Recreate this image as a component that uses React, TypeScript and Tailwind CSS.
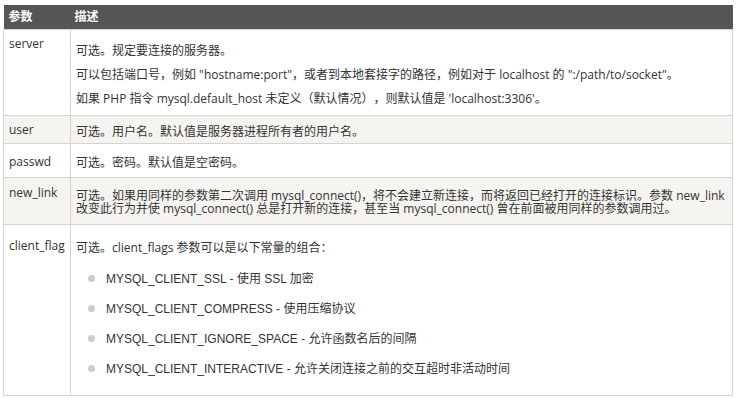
export default function App() {
  const flags = [
    "MYSQL_CLIENT_SSL - 使用 SSL 加密",
    "MYSQL_CLIENT_COMPRESS - 使用压缩协议",
    "MYSQL_CLIENT_IGNORE_SPACE - 允许函数名后的间隔",
    "MYSQL_CLIENT_INTERACTIVE - 允许关闭连接之前的交互超时非活动时间",
  ];

  return (
    <div className="min-h-[402px] bg-white pl-[3px] pt-[5px] font-['Open_Sans','Noto_Sans_CJK_SC',sans-serif] text-[12px] leading-[14px] text-[#333] [text-spacing-trim:space-all]">
      <table className="w-[730px] border-collapse">
        <thead>
          <tr className="h-[24px] bg-[#555] text-left text-white">
            <th className="w-[67px] px-[5px] font-bold">参数</th>
            <th className="px-[4px] font-bold">描述</th>
          </tr>
        </thead>
        <tbody>
          <tr className="h-[86px]">
            <td className="border border-[#d4d4d4] px-[5px] pt-[7px] align-top">server</td>
            <td className="border border-[#d4d4d4] px-[5px] pt-[14px] align-top">
              <p className="mb-[10px]">可选。规定要连接的服务器。</p>
              <p className="mb-[10px]">
                可以包括端口号，例如 "hostname:port"，或者到本地套接字的路径，例如对于 localhost 的 ":/path/to/socket"。
              </p>
              <p>如果 PHP 指令 mysql.default_host 未定义（默认情况），则默认值是 'localhost:3306'。</p>
            </td>
          </tr>
          <tr className="h-[28px] bg-[#f6f4f0]">
            <td className="border border-[#d4d4d4] px-[5px] pt-[7px] align-top">user</td>
            <td className="border border-[#d4d4d4] px-[5px] pt-[9px] align-top">
              可选。用户名。默认值是服务器进程所有者的用户名。
            </td>
          </tr>
          <tr className="h-[34px]">
            <td className="border border-[#d4d4d4] px-[5px] pt-[11px] align-top">passwd</td>
            <td className="border border-[#d4d4d4] px-[5px] pt-[12px] align-top">
              可选。密码。默认值是空密码。
            </td>
          </tr>
          <tr className="h-[47px] bg-[#f6f4f0]">
            <td className="border border-[#d4d4d4] px-[5px] pt-[8px] align-top">new_link</td>
            <td className="border border-[#d4d4d4] px-[5px] pt-[11px] leading-[13px] align-top">
              可选。如果用同样的参数第二次调用 mysql_connect()，将不会建立新连接，而将返回已经打开的连接标识。参数 new_link
              改变此行为并使 mysql_connect() 总是打开新的连接，甚至当 mysql_connect() 曾在前面被用同样的参数调用过。
            </td>
          </tr>
          <tr className="h-[171px]">
            <td className="border border-[#d4d4d4] px-[5px] pt-[14px] align-top">client_flag</td>
            <td className="border border-[#d4d4d4] px-[5px] pt-[16px] align-top">
              <p>可选。client_flags 参数可以是以下常量的组合：</p>
              <ul className="mt-[17px] flex flex-col gap-[16px] pl-[12px] font-['Liberation_Sans','Noto_Sans_CJK_SC',sans-serif]">
                {flags.map((f) => (
                  <li key={f} className="flex items-center gap-[11px]">
                    <span className="h-[7px] w-[7px] shrink-0 rounded-full bg-[#ccc]" />
                    <span>{f}</span>
                  </li>
                ))}
              </ul>
            </td>
          </tr>
        </tbody>
      </table>
    </div>
  );
}
